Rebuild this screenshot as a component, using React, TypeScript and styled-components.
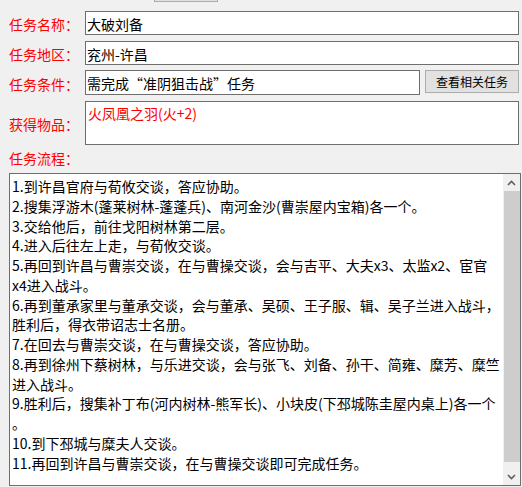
import { FC } from "react";
import styled, { createGlobalStyle } from "styled-components";

const GlobalStyle = createGlobalStyle`
  html, body {
    margin: 0;
    padding: 0;
    background: #f0f0f0;
  }
  body {
    font-family: "Noto Sans CJK SC", "Microsoft YaHei", sans-serif;
    font-size: 14px;
  }
`;

const Page = styled.div`
  width: 522px;
  height: 487px;
  padding: 0 3px 0 9px;
  box-sizing: border-box;
  display: flex;
  flex-direction: column;
  overflow: hidden;
`;

const TopStrip = styled.div`
  height: 2px;
  display: flex;
  align-items: flex-end;
  padding-left: 145px;
  overflow: hidden;
`;

const WinButton = styled.button<{ $w: number; $h: number }>`
  flex: none;
  width: ${(p) => p.$w}px;
  height: ${(p) => p.$h}px;
  box-sizing: border-box;
  border: 1px solid #adadad;
  background: #e1e1e1;
  color: #000;
  font-family: "Noto Sans CJK SC", sans-serif;
  font-size: 12px;
  line-height: 20px;
  padding: 0;
  margin: 0;
`;

const Row = styled.div<{ $top: number; $h: number }>`
  margin-top: ${(p) => p.$top}px;
  height: ${(p) => p.$h}px;
  display: grid;
  grid-template-columns: 76px 1fr;
  align-items: center;
`;

const RowFields = styled.div`
  display: flex;
  gap: 5px;
  height: 100%;
`;

const Label = styled.div`
  color: #ff0000;
  font-size: 14px;
  line-height: 20px;
  white-space: nowrap;
  padding-top: 2px;
`;

const Field = styled.div<{ $red?: boolean; $multi?: boolean }>`
  flex: 1;
  height: 100%;
  box-sizing: border-box;
  border: 1px solid #6e6e6e;
  background: #fff;
  color: ${(p) => (p.$red ? "#ff0000" : "#000")};
  font-size: 14px;
  line-height: ${(p) => (p.$multi ? "20px" : "22px")};
  padding: ${(p) => (p.$multi ? "1px 0 0 2px" : "1px 0 0 1px")};
  white-space: nowrap;
  overflow: hidden;
`;

const FlowLabel = styled(Label)`
  margin-top: 3px;
  height: 20px;
  padding-top: 0;
`;

const Memo = styled.div`
  margin-top: 5px;
  width: 512px;
  height: 313px;
  box-sizing: border-box;
  border: 1px solid #6e6e6e;
  background: #fff;
  display: flex;
`;

const MemoText = styled.div`
  flex: 1;
  padding: 3px 0 0 2px;
  font-size: 14px;
  line-height: 19.75px;
  color: #000;
  white-space: pre;
  overflow: hidden;
`;

const ScrollBar = styled.div`
  width: 17px;
  flex: none;
  display: flex;
  flex-direction: column;
  background: #f0f0f0;
`;

const ScrollArrow = styled.div`
  height: 17px;
  display: flex;
  align-items: center;
  justify-content: center;
`;

const Thumb = styled.div`
  height: 271px;
  margin-left: 1px;
  background: #cdcdcd;
`;

const Track = styled.div`
  flex: 1;
`;

const Chevron: FC<{ up?: boolean }> = ({ up }) => (
  <svg width="9" height="6" viewBox="0 0 9 6">
    <polyline
      points={up ? "1,5 4.5,1.5 8,5" : "1,1 4.5,4.5 8,1"}
      fill="none"
      stroke="#606060"
      strokeWidth="1.6"
    />
  </svg>
);

const flowLines = [
  "1.到许昌官府与荀攸交谈，答应协助。",
  "2.搜集浮游木(蓬莱树林-蓬蓬兵)、南河金沙(曹崇屋内宝箱)各一个。",
  "3.交给他后，前往戈阳树林第二层。",
  "4.进入后往左上走，与荀攸交谈。",
  "5.再回到许昌与曹崇交谈，在与曹操交谈，会与吉平、大夫x3、太监x2、宦官",
  "x4进入战斗。",
  "6.再到董承家里与董承交谈，会与董承、吴硕、王子服、辑、吴子兰进入战斗，",
  "胜利后，得衣带诏志士名册。",
  "7.在回去与曹崇交谈，在与曹操交谈，答应协助。",
  "8.再到徐州下蔡树林，与乐进交谈，会与张飞、刘备、孙干、简雍、糜芳、糜竺",
  "进入战斗。",
  "9.胜利后，搜集补丁布(河内树林-熊军长)、小块皮(下邳城陈圭屋内桌上)各一个",
  "。",
  "10.到下邳城与糜夫人交谈。",
  "11.再回到许昌与曹崇交谈，在与曹操交谈即可完成任务。",
];

const App: FC = () => {
  return (
    <>
      <GlobalStyle />
      <Page>
        <TopStrip>
          <WinButton $w={64} $h={23} />
        </TopStrip>

        <Row $top={9} $h={24}>
          <Label>任务名称：</Label>
          <Field>大破刘备</Field>
        </Row>
        <Row $top={6} $h={24}>
          <Label>任务地区：</Label>
          <Field>兖州-许昌</Field>
        </Row>
        <Row $top={5} $h={24}>
          <Label>任务条件：</Label>
          <RowFields>
            <Field>需完成“准阴狙击战”任务</Field>
            <WinButton $w={94} $h={23}>
              查看相关任务
            </WinButton>
          </RowFields>
        </Row>
        <Row $top={7} $h={44}>
          <Label>获得物品：</Label>
          <Field $red $multi>
            火凤凰之羽(火+2)
          </Field>
        </Row>

        <FlowLabel>任务流程：</FlowLabel>
        <Memo>
          <MemoText>{flowLines.join("\n")}</MemoText>
          <ScrollBar>
            <ScrollArrow>
              <Chevron up />
            </ScrollArrow>
            <Thumb />
            <Track />
            <ScrollArrow>
              <Chevron />
            </ScrollArrow>
          </ScrollBar>
        </Memo>
      </Page>
    </>
  );
};

export default App;
